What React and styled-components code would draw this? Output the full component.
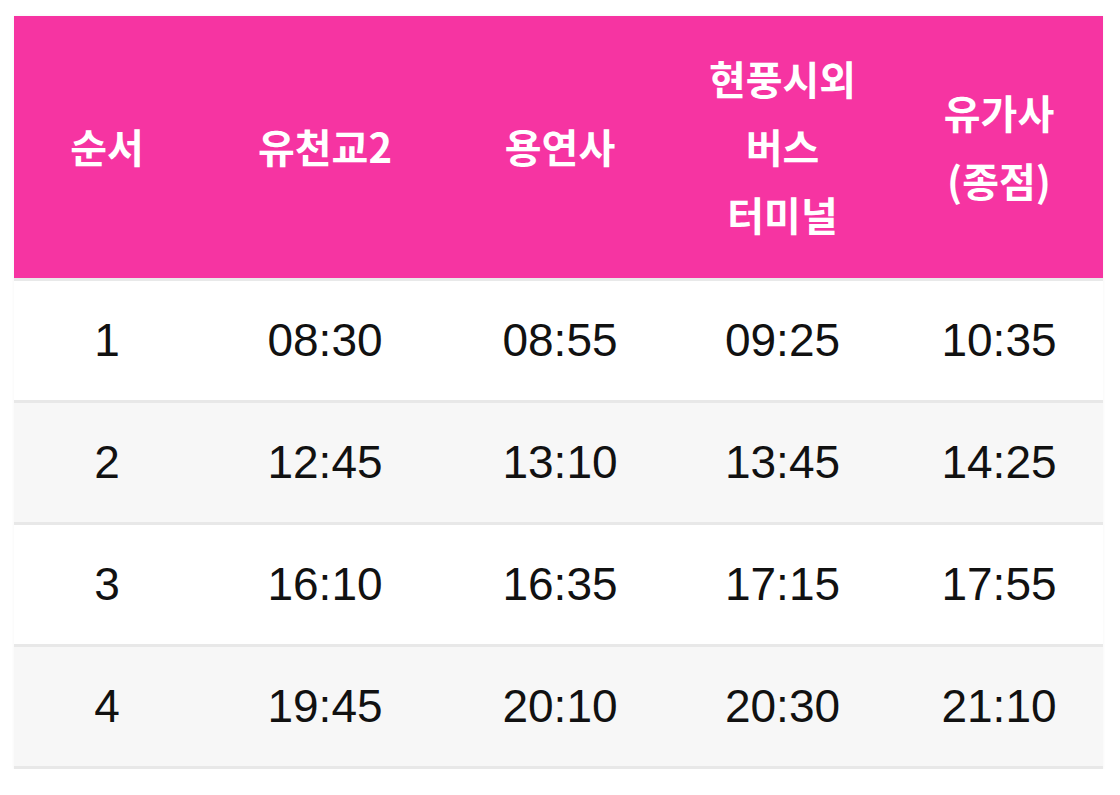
import styled, { createGlobalStyle } from 'styled-components';

const GlobalStyle = createGlobalStyle`
    body {
        margin: 0;
        background: #FFFFFF;
        font-family: "Liberation Sans", "Noto Sans CJK KR", sans-serif;
    }
`;

const Page = styled.div`
    padding: 16px 17px 0 14px;
`;

const Table = styled.table`
    width: 1089px;
    border-collapse: collapse;
    table-layout: fixed;
    box-shadow: 0 0 3px rgba(0, 0, 0, 0.05);
`;

const HeadCell = styled.th`
    background: #F634A2;
    color: #FFFFFF;
    font-family: "Noto Sans CJK KR", "Liberation Sans", sans-serif;
    font-size: 40px;
    font-weight: 700;
    line-height: 68px;
    padding: 28px 0 30px;
    text-align: center;
    vertical-align: middle;
    border-bottom: 3px solid #E8E9E9;
`;

const Row = styled.tr`
    background: ${p => (p.$shaded ? '#F7F7F7' : '#FFFFFF')};
    border-bottom: 3px solid #E8E8E8;
`;

const Cell = styled.td`
    color: #111111;
    font-size: 46px;
    line-height: 68px;
    padding: 25px 0 26px;
    text-align: center;
    vertical-align: middle;
`;

const columns = [
    { width: 186, label: ['순서'] },
    { width: 250, label: ['유천교2'] },
    { width: 220, label: ['용연사'] },
    { width: 225, label: ['현풍시외', '버스', '터미널'] },
    { width: 208, label: ['유가사', '(종점)'] },
];

const rows = [
    ['1', '08:30', '08:55', '09:25', '10:35'],
    ['2', '12:45', '13:10', '13:45', '14:25'],
    ['3', '16:10', '16:35', '17:15', '17:55'],
    ['4', '19:45', '20:10', '20:30', '21:10'],
];

function App() {
    return (
        <Page>
            <GlobalStyle />
            <Table>
                <colgroup>
                    {columns.map((c, i) => <col key={i} width={c.width} />)}
                </colgroup>
                <thead>
                    <tr>
                        {columns.map((c, i) => (
                            <HeadCell key={i}>
                                {c.label.map((line, j) => <div key={j}>{line}</div>)}
                            </HeadCell>
                        ))}
                    </tr>
                </thead>
                <tbody>
                    {rows.map((r, i) => (
                        <Row key={i} $shaded={i % 2 === 1}>
                            {r.map((v, j) => <Cell key={j}>{v}</Cell>)}
                        </Row>
                    ))}
                </tbody>
            </Table>
        </Page>
    );
}

export default App;
